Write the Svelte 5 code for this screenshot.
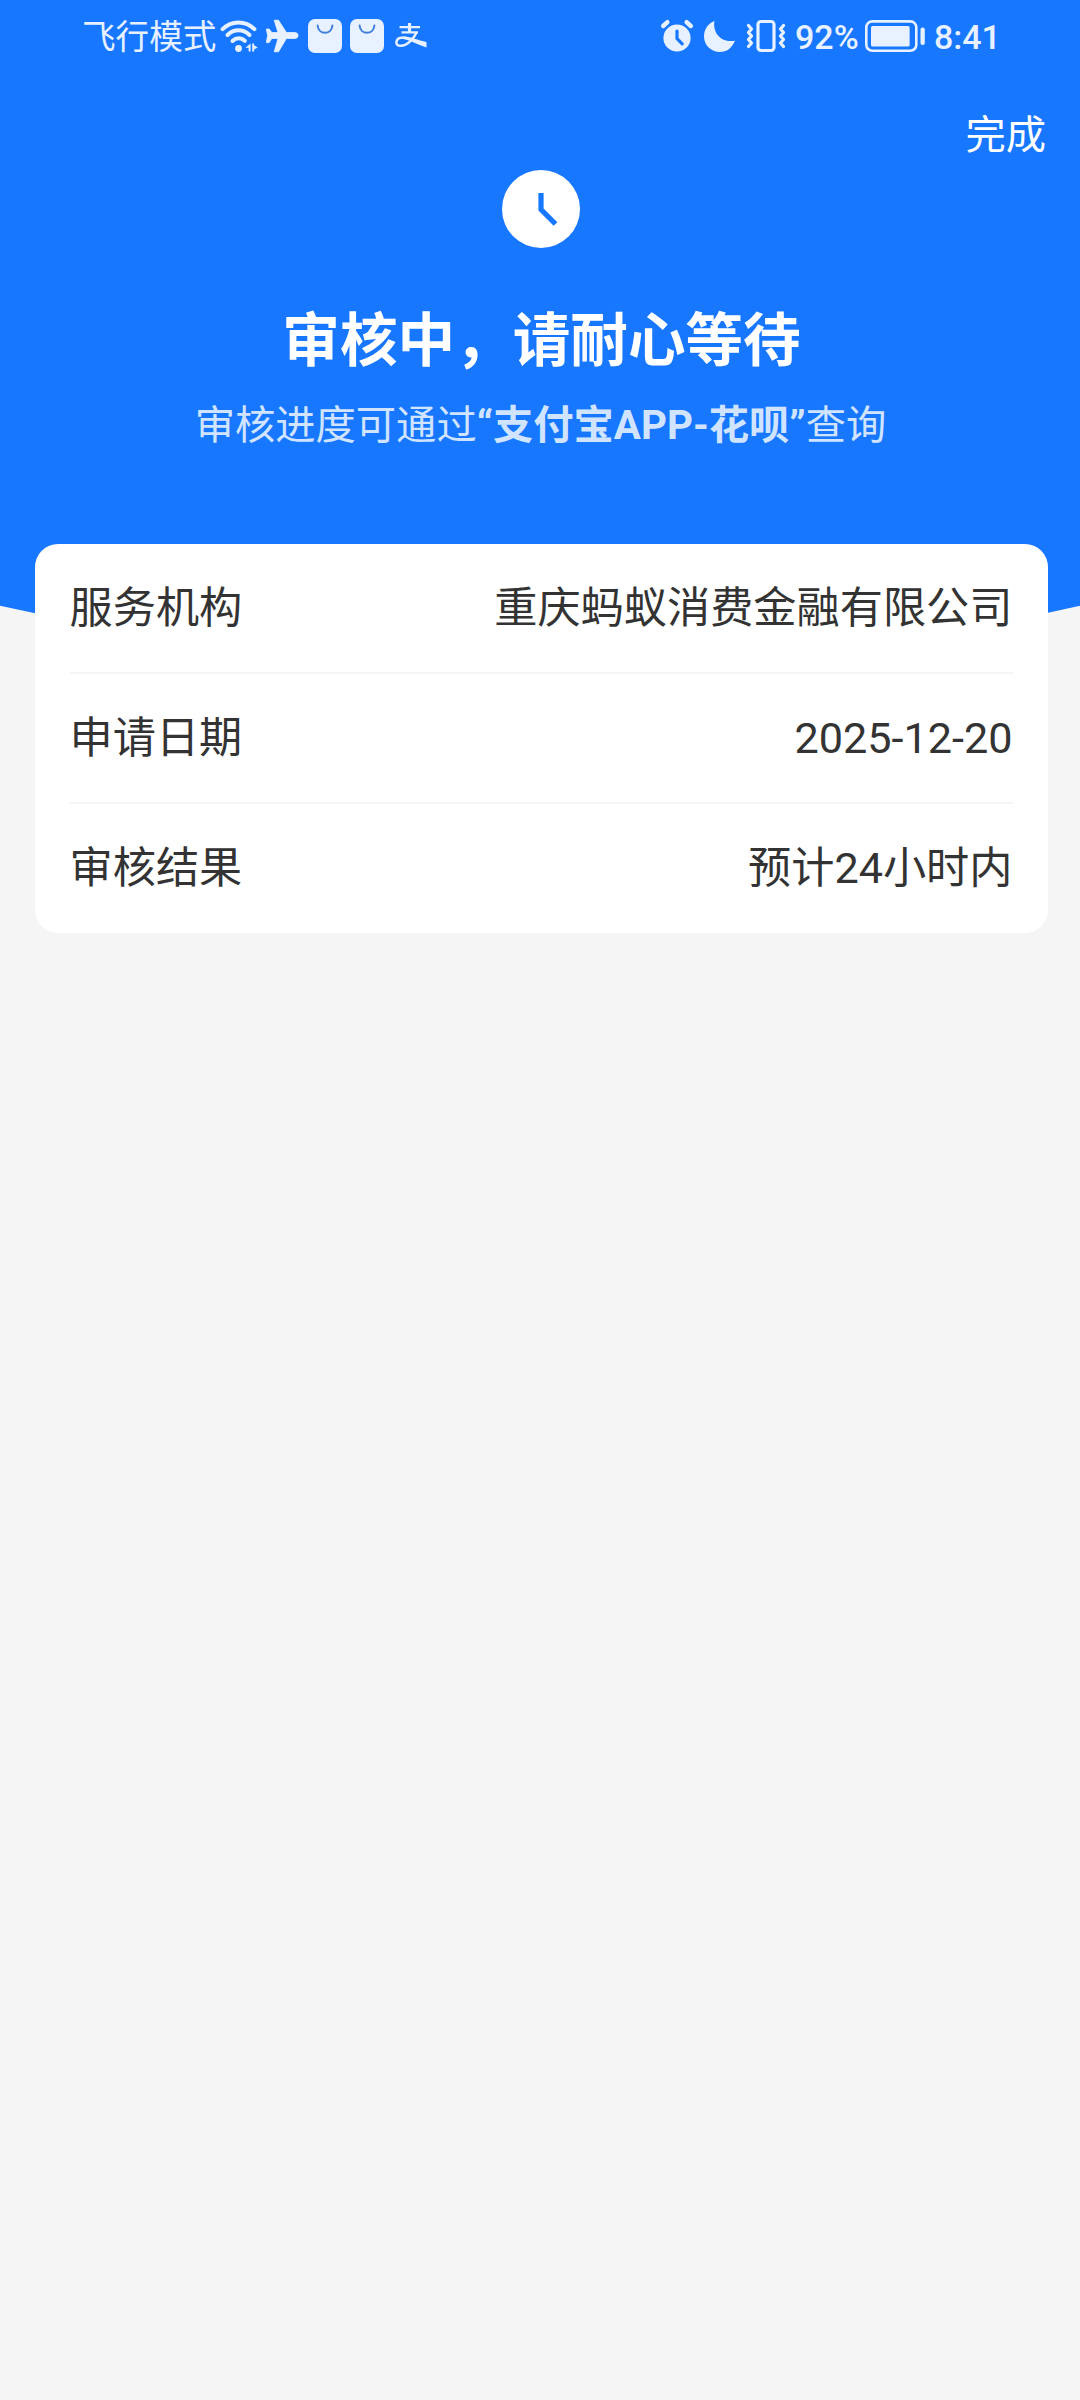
<script>
  const time = "8:41";
  const battery = 92;

  const rows = [
    { label: "服务机构", value: "重庆蚂蚁消费金融有限公司" },
    { label: "申请日期", value: "2025-12-20" },
    { label: "审核结果", value: "预计24小时内" },
  ];
</script>

<main>
  <header>
    <div class="status">
      <div class="left">
        <span class="mode">飞行模式</span>
        <svg class="wifi" width="38" height="34" viewBox="0 0 38 34">
          <g fill="none" stroke="currentColor" stroke-width="4" stroke-linecap="round">
            <path d="M2.600 10.200C11.500 1.200 25.500 1.200 34.400 10.200" />
            <path d="M7.500 16c6.300-6.200 15.700-6.200 22 0" />
            <path d="M12.500 22c3.700-3.600 8.800-3.600 12.300-.2" />
          </g>
          <circle cx="18.500" cy="29.500" r="3.400" fill="currentColor" />
          <path d="M30.600 24.500v7.900h-2v-3.600h-3.200zM32.200 32.400v-7.900h1.900v1.700l3.600 2.200-3.600 2.200v1.800z" fill="currentColor" />
        </svg>
        <svg class="plane" width="34" height="34" viewBox="0 0 34 34">
          <path d="M9.200 1.200h4.300L21.400 13.500h8.500q3.200.3 3.200 3t-3.200 3h-8.500L13.500 32.800H9.200L13 19.500H6.800L4.200 23.600H1.300L2.600 16.500 1.300 10H4.200L6.800 13.500H13z" fill="currentColor" stroke="currentColor" stroke-width=".8" stroke-linejoin="round" />
        </svg>
        {#each [1, 2] as bag (bag)}
          <svg class="bag" width="34" height="34" viewBox="0 0 34 34">
            <rect width="34" height="34" rx="7" fill="currentColor" />
            <path d="M9.600 6.500c.8 9.600 14 9.600 14.800 0" fill="none" stroke="#3f7edb" stroke-width="2" stroke-linecap="round" />
          </svg>
        {/each}
        <svg class="alipay" width="32" height="26" viewBox="0 0 32 26">
          <g fill="none" stroke="currentColor">
            <path d="M14.500 0v9" stroke-width="3.200" />
            <path d="M4.500 4.200h20.500M6.500 9.400h16.500" stroke-width="2.200" />
            <path d="M21.500 9.500C19 15 13 22.800 5.800 22.800 1.800 22.800 1.200 20.500 1.500 18.700 2.200 14 9 13.800 14.500 16" stroke-width="2.500" />
          </g>
          <path d="M8 13.700c6-.8 14.500 3.900 23.500 5.200V24.500C22 21.500 15 17 8 15.700z" fill="currentColor" />
        </svg>
      </div>
      <div class="right">
        <svg class="alarm" width="34" height="34" viewBox="0 0 34 34">
          <circle cx="17" cy="19" r="13.600" fill="currentColor" />
          <path d="M3.200 7 7.400 3.200M26.600 3.200 30.800 7" stroke="currentColor" stroke-width="4.400" stroke-linecap="round" />
          <path d="M17 12v7.500l5.200 5.400" fill="none" stroke="#1777ff" stroke-width="3.200" stroke-linecap="round" />
        </svg>
        <svg class="moon" width="33" height="33" viewBox="0 0 33 33">
          <path d="M11.500 1C9.500 11 16.500 23.500 32 20.700 29 28 23.500 32 17 32 8 32 1 25 1 16.500 1 9 5.300 3.300 11.500 1z" fill="currentColor" />
        </svg>
        <svg class="vibrate" width="40" height="34" viewBox="0 0 40 34">
          <g fill="none" stroke="currentColor" stroke-width="3.200" stroke-linecap="round" stroke-linejoin="round">
            <rect x="12" y="2.500" width="16" height="29" rx="3" />
            <path d="M2.500 6.500l3 3.500-3 3.500 3 3.500-3 3.500 3 3.500-3 3.500M37.500 6.500l-3 3.500 3 3.500-3 3.500 3 3.500-3 3.500 3 3.500" />
          </g>
        </svg>
        <span class="percent">{battery}%</span>
        <svg class="battery" width="62" height="34" viewBox="0 0 62 34">
          <rect x="2.300" y="2.400" width="50" height="29.400" rx="6" fill="none" stroke="currentColor" stroke-width="2.600" />
          <rect x="7" y="7" width={battery * 0.42} height="20.500" rx="1.500" fill="currentColor" />
          <rect x="56.500" y="8.500" width="4.300" height="17.500" rx="2" fill="currentColor" />
        </svg>
        <span class="time">{time}</span>
      </div>
    </div>

    <nav>
      <button>完成</button>
    </nav>

    <svg class="clock" width="78" height="78" viewBox="0 0 78 78">
      <circle cx="39" cy="39" r="39" fill="#fff" />
      <path d="M39 23v16.500l14.500 14.500" fill="none" stroke="#1777ff" stroke-width="5.200" />
    </svg>
    <h1>审核中，请耐心等待</h1>
    <p>审核进度可通过<b>“支付宝APP-花呗”</b>查询</p>
  </header>
  <svg class="curve" width="1080" height="70" viewBox="0 0 1080 70">
    <path d="M0 0h1080v5.800Q540 128 0 5.800z" fill="#1777ff" />
  </svg>

  <section class="card">
    {#each rows as row (row.label)}
      <div class="row">
        <span>{row.label}</span>
        <span>{row.value}</span>
      </div>
    {/each}
  </section>
</main>

<style>
  :global(body) {
    background-color: #f5f5f5;
  }

  main {
    width: 1080px;
    height: 2400px;
    overflow: hidden;
    background-color: #f5f5f5;
    font-family: Roboto, "Noto Sans CJK SC", sans-serif;
    color: #333;
  }

  header {
    display: flex;
    flex-direction: column;
    align-items: center;
    height: 600px;
    background-color: #1777ff;
    color: white;
  }

  svg {
    display: block;
    flex: none;
  }

  .status {
    display: flex;
    justify-content: space-between;
    box-sizing: border-box;
    width: 100%;
    height: 72px;
    padding: 0 82px;
    color: #e8f1ff;
    font-size: 34px;
    line-height: 72px;
    white-space: nowrap;
  }

  .left,
  .right {
    display: flex;
    align-items: center;
    height: 72px;
  }

  .mode {
    width: 138px;
    padding-top: 4px;
    font-size: 33.600px;
  }

  .plane {
    margin-left: 7px;
  }

  .bag {
    margin-left: 8px;
  }

  .plane + .bag {
    margin-left: 9px;
  }

  .alipay {
    margin-left: 11px;
  }

  .moon {
    margin-left: 9px;
  }

  .vibrate {
    margin-left: 10px;
  }

  .percent,
  .time {
    padding-top: 2px;
    font-weight: 500;
  }

  .percent {
    margin-left: 9px;
    width: 69px;
  }

  .time {
    margin-left: 8px;
    width: 64px;
  }

  nav {
    display: flex;
    justify-content: flex-end;
    align-items: center;
    box-sizing: border-box;
    width: 100%;
    height: 98px;
    padding: 29px 34px 0 0;
  }

  button {
    padding: 0;
    border: none;
    background: none;
    color: white;
    font-family: inherit;
    font-size: 40.300px;
    line-height: 60px;
    cursor: pointer;
  }

  .clock {
    margin-left: 2px;
  }

  h1 {
    margin: 52px 0 0 3px;
    font-size: 57.600px;
    line-height: 84px;
    font-weight: 700;
  }

  p {
    margin: 12px 0 0 1px;
    color: #d1e4ff;
    font-size: 40.300px;
    line-height: 60px;
  }

  .card {
    position: relative;
    width: 1013px;
    margin: -126px 0 0 34.500px;
    box-sizing: border-box;
    padding: 0 35px;
    border-radius: 23px;
    background-color: white;
  }

  .row {
    display: flex;
    justify-content: space-between;
    box-sizing: border-box;
    height: 130px;
    border-bottom: 2px solid #f5f5f5;
    font-size: 43.200px;
    line-height: 130px;
  }

  .row:last-child {
    height: 129px;
    border-bottom: none;
  }
</style>
